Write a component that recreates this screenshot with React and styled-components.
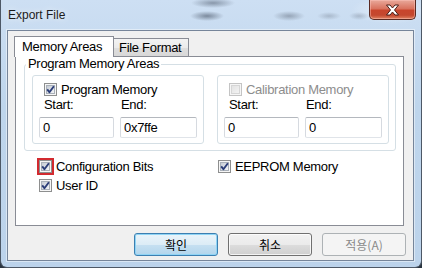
import React, { useId } from 'react';
import styled, { createGlobalStyle, css } from 'styled-components';

// --------------------------------------
// Fonts / colours
// --------------------------------------
const UI_FONT = `"Liberation Sans", Arial, sans-serif`;
const KR_FONT = `"Noto Sans CJK KR", "Liberation Sans", sans-serif`;

const GlobalStyle = createGlobalStyle`
  html, body { margin: 0; padding: 0; }
  body { width: 422px; height: 268px; overflow: hidden; background: #2a3440; }
`;

// --------------------------------------
// Checkbox glyph (Win7 style)
// --------------------------------------
const CheckGlyph = ({ checked, disabled }) => {
    const id = useId();
    return (
        <svg width="13" height="13" viewBox="0 0 13 13">
            <defs>
                <linearGradient id={id} x1="0" y1="0" x2="1" y2="1">
                    <stop offset="0" stopColor={disabled ? '#e2e2e2' : '#c3c9d2'} />
                    <stop offset="1" stopColor={disabled ? '#f4f4f4' : '#f7f8fa'} />
                </linearGradient>
            </defs>
            <rect x="0.5" y="0.5" width="12" height="12" fill="#f6f6f6" stroke={disabled ? '#c4c4c4' : '#8e8f8f'} />
            <rect x="2.5" y="2.5" width="8" height="8" fill={`url(#${id})`} stroke={disabled ? '#d6d6d6' : '#a9b0b9'} />
            {checked && (
                <path d="M3.2 6.4 L5.4 9.2 L9.9 3.2" stroke="#2b3d78" strokeWidth="1.9" fill="none" strokeLinejoin="round" />
            )}
        </svg>
    );
};

const Check = ({ label, checked, disabled, highlight }) => (
    <CheckLabel $disabled={disabled}>
        <CheckBox $highlight={highlight}>
            <CheckGlyph checked={checked} disabled={disabled} />
        </CheckBox>
        {label}
    </CheckLabel>
);

// --------------------------------------
// Address block (Program / Calibration)
// --------------------------------------
const AddressBox = ({ title, checked, disabled, start, end }) => (
    <InnerBox>
        <CheckLine>
            <Check label={title} checked={checked} disabled={disabled} />
        </CheckLine>
        <FieldGrid>
            <FieldLabel $indent={5}>Start:</FieldLabel>
            <FieldLabel $indent={1}>End:</FieldLabel>
            <TextBox readOnly value={start} />
            <TextBox readOnly value={end} />
        </FieldGrid>
    </InnerBox>
);

// --------------------------------------
// Create Component
// --------------------------------------
const App = () => {
    return (
        <>
            <GlobalStyle />
            <Window>
                <TitleBar>
                    <Title>Export File</Title>
                    <CloseButton aria-label="Close">
                        <svg width="17" height="14" viewBox="0 0 17 14">
                            <path
                                d="M2.5 2 L6 2 L8.5 5 L11 2 L14.5 2 L10.5 7 L14.5 12 L11 12 L8.5 9 L6 12 L2.5 12 L6.5 7 Z"
                                fill="#fff"
                                stroke="#4a1d16"
                                strokeWidth="1"
                                strokeLinejoin="round"
                            />
                        </svg>
                    </CloseButton>
                </TitleBar>

                <Client>
                    <TabRow>
                        <Tab $active>Memory Areas</Tab>
                        <Tab>File Format</Tab>
                    </TabRow>

                    <Panel>
                        <GroupBox>
                            <GroupLegend>Program Memory Areas</GroupLegend>
                            <InnerGrid>
                                <AddressBox title="Program Memory" checked start="0" end="0x7ffe" />
                                <AddressBox title="Calibration Memory" disabled start="0" end="0" />
                            </InnerGrid>
                        </GroupBox>

                        <OptionsGrid>
                            <Check label="Configuration Bits" checked highlight />
                            <Check label="EEPROM Memory" checked />
                            <Check label="User ID" checked />
                        </OptionsGrid>
                    </Panel>

                    <ButtonRow>
                        <Button $default>확인</Button>
                        <Button>취소</Button>
                        <Button disabled>적용(A)</Button>
                    </ButtonRow>
                </Client>
            </Window>
        </>
    );
};

// --------------------------------------
// Styles
// --------------------------------------
const Window = styled.div`
    box-sizing: border-box;
    width: 422px;
    height: 268px;
    padding: 0 7px 6px 6px;
    border: 1px solid #4d5866;
    border-top: none;
    border-radius: 0 0 7px 7px;
    display: flex;
    flex-direction: column;
    font-family: ${UI_FONT};
    background:
        radial-gradient(ellipse 22px 5px at 212px 3px, rgba(80, 92, 110, 0.55), transparent),
        radial-gradient(ellipse 17px 5px at 206px 16px, rgba(70, 82, 100, 0.6), transparent),
        radial-gradient(ellipse 16px 5px at 288px 16px, rgba(85, 96, 112, 0.45), transparent),
        radial-gradient(ellipse 12px 4px at 328px 16px, rgba(90, 100, 115, 0.3), transparent),
        radial-gradient(ellipse 10px 4px at 358px 16px, rgba(90, 100, 115, 0.3), transparent),
        radial-gradient(ellipse 40px 14px at 390px 10px, rgba(255, 255, 255, 0.5), transparent),
        linear-gradient(180deg, #cddff3 0%, #bed5ec 40%, #bcd3eb 100%);
`;

const TitleBar = styled.div`
    height: 30px;
    flex: none;
    display: flex;
    justify-content: space-between;
    align-items: flex-start;
    margin-right: -2px;
`;

const Title = styled.div`
    padding: 7px 0 0 1px;
    font-size: 12px;
    line-height: 16px;
    color: #1b1b1b;
    text-shadow: 0 0 6px rgba(255, 255, 255, 0.9);
`;

const CloseButton = styled.div`
    box-sizing: border-box;
    width: 47px;
    height: 20px;
    display: flex;
    align-items: center;
    justify-content: center;
    border: 1px solid #5a2a22;
    border-top: none;
    border-radius: 0 0 5px 5px;
    background: linear-gradient(180deg, #e9a99b 0%, #d9735f 45%, #c8452c 55%, #c4482f 80%, #e08462 100%);
    box-shadow: inset 0 0 0 1px rgba(255, 200, 190, 0.45);
`;

const Client = styled.div`
    flex: 1;
    box-sizing: border-box;
    display: flex;
    flex-direction: column;
    background: #f0f0f0;
    border: 1px solid #76859a;
    box-shadow: 0 0 0 1px rgba(255, 255, 255, 0.45);
`;

const TabRow = styled.div`
    position: relative;
    z-index: 1;
    height: 20px;
    margin-top: 5px;
    padding-left: 6px;
    display: flex;
    align-items: flex-end;
`;

const Tab = styled.div`
    box-sizing: border-box;
    font-size: 13px;
    letter-spacing: -0.3px;
    color: #000;
    border: 1px solid #898c95;
    ${props => props.$active ? css`
        width: 100px;
        height: 21px;
        margin-bottom: -1px;
        padding: 2px 0 0 7px;
        background: #fff;
        border-bottom: none;
    ` : css`
        width: 75px;
        height: 18px;
        padding: 1px 0 0 5px;
        border-left: none;
        border-bottom: none;
        background: linear-gradient(180deg, #f3f3f3 0%, #ebebeb 50%, #dedede 51%, #d8d8d8 100%);
    `}
`;

const Panel = styled.div`
    box-sizing: border-box;
    height: 170px;
    flex: none;
    margin: 0 9px 0 7px;
    padding: 0 7px 0 8px;
    background: #fff;
    border: 1px solid #898c95;
`;

const GroupBox = styled.fieldset`
    margin: 0;
    min-width: 0;
    padding: 4px 6px 6px 7px;
    border: 1px solid #d5dfe5;
    border-radius: 3px;
`;

const GroupLegend = styled.legend`
    margin-left: -6px;
    padding: 0 2px;
    font-size: 13px;
    line-height: 14px;
    letter-spacing: -0.3px;
    color: #000;
`;

const InnerGrid = styled.div`
    display: grid;
    grid-template-columns: 1fr 1fr;
    column-gap: 13px;
`;

const InnerBox = styled.div`
    box-sizing: border-box;
    height: 69px;
    padding: 5px 6px 5px 6px;
    border: 1px solid #d5dfe5;
    border-radius: 3px;
`;

const CheckLine = styled.div`
    height: 16px;
    padding-left: 5px;
    display: flex;
    align-items: center;
`;

const FieldGrid = styled.div`
    margin-top: 1px;
    display: grid;
    grid-template-columns: 75px 77px;
    grid-template-rows: 14px 21px;
    column-gap: 6px;
    row-gap: 5px;
`;

const FieldLabel = styled.div`
    padding-left: ${props => props.$indent}px;
    font-size: 13px;
    line-height: 14px;
    letter-spacing: -0.3px;
    color: #000;
`;

const TextBox = styled.input`
    box-sizing: border-box;
    width: 100%;
    height: 21px;
    margin: 0;
    padding: 0 3px;
    font-family: ${UI_FONT};
    font-size: 13px;
    letter-spacing: -0.3px;
    color: #000;
    background: #fff;
    border: 1px solid;
    border-color: #b4b8be #d6dae0 #e0e4e9 #d6dae0;
    border-radius: 2px;
    outline: none;
`;

const OptionsGrid = styled.div`
    margin-top: 7px;
    padding-left: 15px;
    display: grid;
    grid-template-columns: 179px 1fr;
    grid-auto-rows: 17px;
    row-gap: 2px;
`;

const CheckLabel = styled.label`
    display: flex;
    align-items: center;
    gap: 4px;
    font-size: 13px;
    letter-spacing: -0.3px;
    white-space: nowrap;
    color: ${props => props.$disabled ? '#8d8d8d' : '#000'};
`;

const CheckBox = styled.span`
    display: block;
    width: 13px;
    height: 13px;
    flex: none;
    svg { display: block; }
    ${props => props.$highlight && css`
        outline: 2px solid #d22a2f;
        background: #d22a2f;
    `}
`;

const ButtonRow = styled.div`
    margin-top: 7px;
    padding-right: 7px;
    display: flex;
    justify-content: flex-end;
    gap: 10px;
`;

const Button = styled.button`
    box-sizing: border-box;
    width: 84px;
    height: 23px;
    margin: 0;
    padding: 0;
    font-family: ${KR_FONT};
    font-size: 12px;
    color: #000;
    border: 1px solid #707070;
    border-radius: 3px;
    background: linear-gradient(180deg, #f2f2f2 0%, #ebebeb 50%, #dddddd 51%, #cfcfcf 100%);
    box-shadow: inset 0 0 0 1px rgba(255, 255, 255, 0.75);
    ${props => props.$default && css`
        border-color: #3c7fb1;
        background: linear-gradient(180deg, #eaf4fa 0%, #dcecf6 50%, #c6e0f1 51%, #b2d5ec 100%);
        box-shadow: inset 0 0 0 1px #8fd4f5;
    `}
    &:disabled {
        color: #8a8a8a;
        border-color: #adb2b5;
        background: #f4f4f4;
        box-shadow: none;
    }
`;

// --------------------------------------
// Export Component
// --------------------------------------
export default App;
